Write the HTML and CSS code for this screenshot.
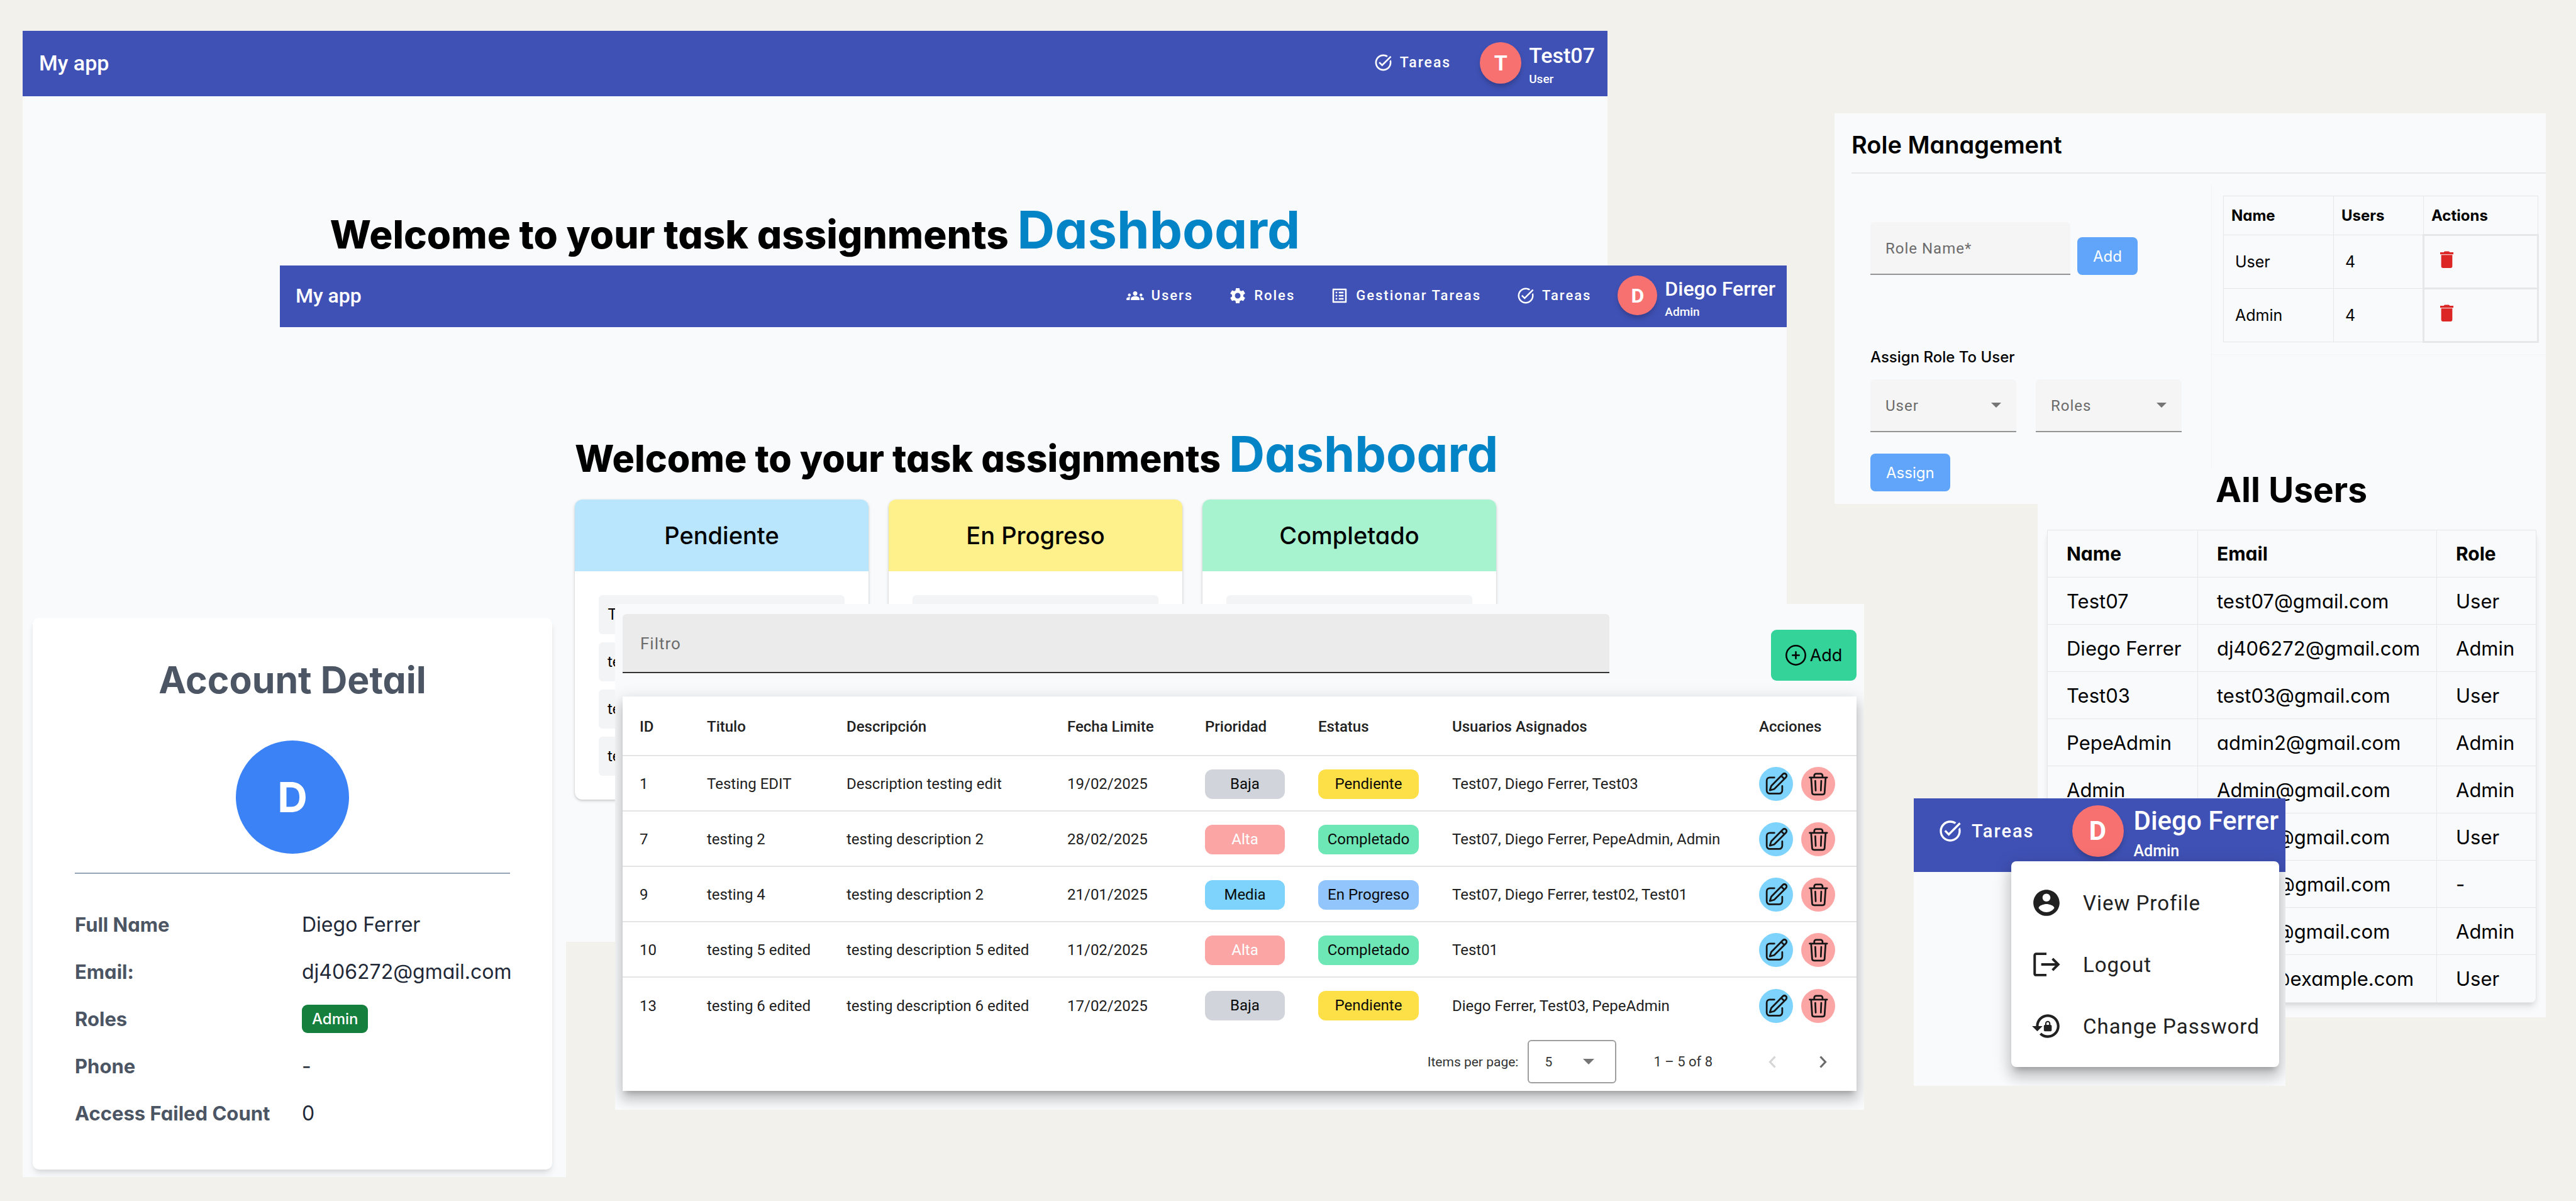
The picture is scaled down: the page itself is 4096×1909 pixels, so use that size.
FILE: index.html
```html
<!DOCTYPE html>
<html lang="es">
<head>
<meta charset="utf-8">
<meta name="viewport" content="width=device-width, initial-scale=1">
<title>My app</title>
<link rel="stylesheet" href="styles.css">
</head>
<body>
<svg class="sprite" aria-hidden="true">
  <symbol id="i-groups" viewBox="-1 -1 26 26"><path d="M12 12.75c1.63 0 3.07.39 4.24.9 1.08.48 1.76 1.56 1.76 2.73V18H6v-1.61c0-1.18.68-2.26 1.76-2.73 1.17-.52 2.61-.91 4.24-.91zM4 13c1.1 0 2-.9 2-2s-.9-2-2-2-2 .9-2 2 .9 2 2 2zm1.13 1.1c-.37-.06-.74-.1-1.13-.1-.99 0-1.93.21-2.78.58C.48 14.9 0 15.62 0 16.43V18h4.5v-1.61c0-.83.23-1.61.63-2.29zM20 13c1.1 0 2-.9 2-2s-.9-2-2-2-2 .9-2 2 .9 2 2 2zm4 3.43c0-.81-.48-1.53-1.22-1.85-.85-.37-1.79-.58-2.78-.58-.39 0-.76.04-1.13.1.4.68.63 1.46.63 2.29V18H24v-1.57zM12 6c1.66 0 3 1.34 3 3s-1.34 3-3 3-3-1.34-3-3 1.34-3 3-3z"/></symbol>
  <symbol id="i-settings" viewBox="0 0 24 24"><path d="M19.14 12.94c.04-.3.06-.61.06-.94 0-.32-.02-.64-.07-.94l2.03-1.58c.18-.14.23-.41.12-.61l-1.92-3.32c-.12-.22-.37-.29-.59-.22l-2.39.96c-.5-.38-1.03-.7-1.62-.94l-.36-2.54c-.04-.24-.24-.41-.48-.41h-3.84c-.24 0-.43.17-.47.41l-.36 2.54c-.59.24-1.13.57-1.62.94l-2.39-.96c-.22-.08-.47 0-.59.22L2.74 8.87c-.12.21-.08.47.12.61l2.03 1.58c-.05.3-.09.63-.09.94s.02.64.07.94l-2.03 1.58c-.18.14-.23.41-.12.61l1.92 3.32c.12.22.37.29.59.22l2.39-.96c.5.38 1.03.7 1.62.94l.36 2.54c.05.24.24.41.48.41h3.84c.24 0 .44-.17.47-.41l.36-2.54c.59-.24 1.13-.56 1.62-.94l2.39.96c.22.08.47 0 .59-.22l1.92-3.32c.12-.22.07-.47-.12-.61l-2.01-1.58zM12 15.6c-1.98 0-3.6-1.62-3.6-3.6s1.62-3.6 3.6-3.6 3.6 1.62 3.6 3.6-1.62 3.6-3.6 3.6z"/></symbol>
  <symbol id="i-list" viewBox="0 0 24 24"><path d="M19 5v14H5V5h14m1.1-2H3.9c-.5 0-.9.4-.9.9v16.2c0 .4.4.9.9.9h16.2c.4 0 .9-.5.9-.9V3.9c0-.5-.5-.9-.9-.9zM11 7h6v2h-6V7zm0 4h6v2h-6v-2zm0 4h6v2h-6zM7 7h2v2H7zm0 4h2v2H7zm0 4h2v2H7z"/></symbol>
  <symbol id="i-task" viewBox="0 0 24 24"><path d="M22 5.18L10.59 16.6l-4.24-4.24 1.41-1.41 2.83 2.83 10-10L22 5.18zm-2.21 5.04c.13.57.21 1.17.21 1.78 0 4.42-3.58 8-8 8s-8-3.58-8-8 3.58-8 8-8c1.58 0 3.04.46 4.28 1.25l1.44-1.44C16.1 2.67 14.13 2 12 2 6.48 2 2 6.48 2 12s4.48 10 10 10 10-4.48 10-10c0-1.19-.22-2.33-.6-3.39l-1.61 1.61z"/></symbol>
  <symbol id="i-account" viewBox="0 0 24 24"><path d="M12 2C6.48 2 2 6.48 2 12s4.48 10 10 10 10-4.48 10-10S17.52 2 12 2zm0 3c1.66 0 3 1.34 3 3s-1.34 3-3 3-3-1.34-3-3 1.34-3 3-3zm0 14.2c-2.5 0-4.71-1.28-6-3.22.03-1.99 4-3.08 6-3.08 1.99 0 5.97 1.09 6 3.08-1.29 1.94-3.5 3.22-6 3.22z"/></symbol>
  <symbol id="i-logout" viewBox="0 0 24 24"><path fill="none" stroke="currentColor" stroke-width="1.9" d="M12 3.9H4.2c-.7 0-1.2.5-1.2 1.200v13.800c0 .7.5 1.200 1.200 1.200H12M8 12h12.600M16.600 7.600 21 12l-4.400 4.400"/></symbol>
  <symbol id="i-reset" viewBox="0 0 24 24"><path d="M13 3c-4.970 0-9 4.030-9 9H1l4 4 4-4H6c0-3.860 3.140-7 7-7s7 3.140 7 7-3.140 7-7 7c-1.900 0-3.620-.76-4.880-1.990L6.700 18.420C8.320 20.010 10.550 21 13 21c4.970 0 9-4.030 9-9s-4.030-9-9-9zm2 8v-1c0-1.100-.9-2-2-2s-2 .9-2 2v1c-.55 0-1 .45-1 1v3c0 .55.45 1 1 1h4c.55 0 1-.45 1-1v-3c0-.55-.45-1-1-1zm-1 0h-2v-1c0-.55.45-1 1-1s1 .45 1 1v1z"/></symbol>
  <symbol id="i-edit" viewBox="0 0 82 82"><path fill="none" stroke="currentColor" stroke-width="4.200" stroke-linecap="round" stroke-linejoin="round" d="M37 25.500H26a7.500 7.500 0 0 0-7.500 7.500v24a7.500 7.500 0 0 0 7.500 7.500h22.500a7.500 7.500 0 0 0 7.500-7.500V46M26 56.500l3.500-10.500L57.500 17.500a5 5 0 0 1 7.500 7.500L36.500 53.500zM53.500 21.500l7.500 7.500"/></symbol>
  <symbol id="i-bin" viewBox="0 0 82 82"><path fill="none" stroke="currentColor" stroke-width="4.200" stroke-linecap="round" stroke-linejoin="round" d="M20.500 25.500h42M31.500 25v-4a4.500 4.500 0 0 1 4.500-4.500h11a4.500 4.500 0 0 1 4.500 4.500v4M24 26l2.500 36.500a4.500 4.500 0 0 0 4.500 4h21a4.500 4.500 0 0 0 4.500-4L59 26M34 33.500l1 23.500M48.500 33.500l-1 23.500"/></symbol>
  <symbol id="i-plus" viewBox="0 0 50 50"><g fill="none" stroke="currentColor" stroke-width="3.800" stroke-linecap="round"><circle cx="25" cy="25" r="23"/><path d="M25 17v16M17 25h16"/></g></symbol>
  <symbol id="i-trash" viewBox="0 0 32 41"><path d="M9 3a2.500 2.500 0 0 1 2.500-2.500h9A2.500 2.500 0 0 1 23 3h9v4.800H0V3zM2.500 9.500h27v27a4.500 4.500 0 0 1-4.500 4.500H7a4.500 4.500 0 0 1-4.500-4.500z"/></symbol>
  <symbol id="i-prev" viewBox="0 0 12 20"><path fill="none" stroke="currentColor" stroke-width="3.200" d="M10.500 1.500 2.500 10l8 8.500"/></symbol>
  <symbol id="i-next" viewBox="0 0 12 20"><path fill="none" stroke="currentColor" stroke-width="3.200" d="m1.500 1.500 8 8.500-8 8.500"/></symbol>
</svg>

<div class="desk">

  <section class="window user-home">
    <header class="bar bar-large">
      <a class="brand" href="#">My app</a>
      <nav class="bar-nav">
        <a href="#"><svg class="icon"><use href="#i-task"/></svg>Tareas</a>
      </nav>
      <button type="button" class="profile"><span class="avatar">T</span><span class="who"><span class="who-name">Test07</span><span class="who-role">User</span></span></button>
    </header>
    <h1 class="welcome welcome-large">Welcome to your task assignments <span>Dashboard</span></h1>
  </section>

  <section class="window admin-home">
    <header class="bar bar-medium">
      <a class="brand" href="#">My app</a>
      <nav class="bar-nav">
        <a href="#"><svg class="icon"><use href="#i-groups"/></svg>Users</a>
        <a href="#"><svg class="icon"><use href="#i-settings"/></svg>Roles</a>
        <a href="#"><svg class="icon"><use href="#i-list"/></svg>Gestionar Tareas</a>
        <a href="#"><svg class="icon"><use href="#i-task"/></svg>Tareas</a>
      </nav>
      <button type="button" class="profile"><span class="avatar">D</span><span class="who"><span class="who-name">Diego Ferrer</span><span class="who-role">Admin</span></span></button>
    </header>
    <main class="board-page">
      <h1 class="welcome">Welcome to your task assignments <span>Dashboard</span></h1>
      <div class="board">
        <section class="lane"><h2 class="lane-title lane-pending">Pendiente</h2>
          <ul class="lane-list"><li>Te</li><li>te</li><li>te</li><li>te</li></ul></section>
        <section class="lane"><h2 class="lane-title lane-progress">En Progreso</h2>
          <ul class="lane-list"><li></li></ul></section>
        <section class="lane"><h2 class="lane-title lane-done">Completado</h2>
          <ul class="lane-list"><li></li></ul></section>
      </div>
    </main>
  </section>

  <section class="window account">
    <div class="account-card">
      <h2 class="account-title">Account Detail</h2>
      <div class="account-avatar">D</div>
      <dl class="account-list">
        <dt>Full Name</dt><dd>Diego Ferrer</dd>
        <dt>Email:</dt><dd>dj406272@gmail.com</dd>
        <dt>Roles</dt><dd><span class="role-badge">Admin</span></dd>
        <dt>Phone</dt><dd>-</dd>
        <dt>Access Failed Count</dt><dd>0</dd>
      </dl>
    </div>
  </section>

  <section class="window tasks">
    <div class="tasks-head">
      <div class="field field-filter"><label for="filter">Filtro</label><input id="filter" type="text"></div>
      <button type="button" class="add-task"><svg class="icon"><use href="#i-plus"/></svg>Add</button>
    </div>
    <div class="sheet">
      <table class="task-table">
        <colgroup><col class="c-id"><col class="c-title"><col class="c-desc"><col class="c-date"><col class="c-prio"><col class="c-status"><col class="c-users"><col class="c-act"></colgroup>
        <thead><tr><th>ID</th><th>Titulo</th><th>Descripción</th><th>Fecha Limite</th><th>Prioridad</th><th>Estatus</th><th>Usuarios Asignados</th><th>Acciones</th></tr></thead>
        <tbody>
          <tr><td>1</td><td>Testing EDIT</td><td>Description testing edit</td><td>19/02/2025</td><td><span class="chip chip-low">Baja</span></td><td><span class="chip chip-pending">Pendiente</span></td><td>Test07, Diego Ferrer, Test03</td><td><div class="acts"><button type="button" class="act act-edit" aria-label="Edit"><svg class="icon"><use href="#i-edit"/></svg></button><button type="button" class="act act-bin" aria-label="Delete"><svg class="icon"><use href="#i-bin"/></svg></button></div></td></tr>
          <tr><td>7</td><td>testing 2</td><td>testing description 2</td><td>28/02/2025</td><td><span class="chip chip-high">Alta</span></td><td><span class="chip chip-done">Completado</span></td><td>Test07, Diego Ferrer, PepeAdmin, Admin</td><td><div class="acts"><button type="button" class="act act-edit" aria-label="Edit"><svg class="icon"><use href="#i-edit"/></svg></button><button type="button" class="act act-bin" aria-label="Delete"><svg class="icon"><use href="#i-bin"/></svg></button></div></td></tr>
          <tr><td>9</td><td>testing 4</td><td>testing description 2</td><td>21/01/2025</td><td><span class="chip chip-mid">Media</span></td><td><span class="chip chip-progress">En Progreso</span></td><td>Test07, Diego Ferrer, test02, Test01</td><td><div class="acts"><button type="button" class="act act-edit" aria-label="Edit"><svg class="icon"><use href="#i-edit"/></svg></button><button type="button" class="act act-bin" aria-label="Delete"><svg class="icon"><use href="#i-bin"/></svg></button></div></td></tr>
          <tr><td>10</td><td>testing 5 edited</td><td>testing description 5 edited</td><td>11/02/2025</td><td><span class="chip chip-high">Alta</span></td><td><span class="chip chip-done">Completado</span></td><td>Test01</td><td><div class="acts"><button type="button" class="act act-edit" aria-label="Edit"><svg class="icon"><use href="#i-edit"/></svg></button><button type="button" class="act act-bin" aria-label="Delete"><svg class="icon"><use href="#i-bin"/></svg></button></div></td></tr>
          <tr><td>13</td><td>testing 6 edited</td><td>testing description 6 edited</td><td>17/02/2025</td><td><span class="chip chip-low">Baja</span></td><td><span class="chip chip-pending">Pendiente</span></td><td>Diego Ferrer, Test03, PepeAdmin</td><td><div class="acts"><button type="button" class="act act-edit" aria-label="Edit"><svg class="icon"><use href="#i-edit"/></svg></button><button type="button" class="act act-bin" aria-label="Delete"><svg class="icon"><use href="#i-bin"/></svg></button></div></td></tr>
        </tbody>
      </table>
      <div class="pager">
        <label for="page-size">Items per page:</label>
        <div class="pager-size"><select id="page-size"><option>5</option></select></div>
        <span class="pager-range">1 – 5 of 8</span>
        <button type="button" class="pager-prev" aria-label="Previous page" disabled><svg class="icon"><use href="#i-prev"/></svg></button>
        <button type="button" class="pager-next" aria-label="Next page"><svg class="icon"><use href="#i-next"/></svg></button>
      </div>
    </div>
  </section>

  <section class="window roles">
    <h2 class="roles-title">Role Management</h2>
    <div class="roles-body">
      <div class="roles-forms">
        <form class="add-role">
          <div class="field field-role"><label for="role-name">Role Name*</label><input id="role-name" type="text"></div>
          <button type="button" class="blue">Add</button>
        </form>
        <form class="assign">
          <h3 class="assign-title">Assign Role To User</h3>
          <div class="assign-row">
            <div class="field field-select"><label for="pick-user">User</label><select id="pick-user"><option></option></select></div>
            <div class="field field-select"><label for="pick-role">Roles</label><select id="pick-role"><option></option></select></div>
          </div>
          <button type="button" class="blue">Assign</button>
        </form>
      </div>
      <aside class="roles-side">
        <div class="roles-box">
          <table class="role-table">
            <thead><tr><th>Name</th><th>Users</th><th>Actions</th></tr></thead>
            <tbody>
              <tr><td>User</td><td>4</td><td class="cell-act"><button type="button" class="trash" aria-label="Delete"><svg class="icon"><use href="#i-trash"/></svg></button></td></tr>
              <tr><td>Admin</td><td>4</td><td class="cell-act"><button type="button" class="trash" aria-label="Delete"><svg class="icon"><use href="#i-trash"/></svg></button></td></tr>
            </tbody>
          </table>
        </div>
      </aside>
    </div>
  </section>

  <section class="window users">
    <h2 class="users-title">All Users</h2>
    <table class="user-table">
      <colgroup><col class="u-name"><col class="u-mail"><col class="u-role"></colgroup>
      <thead><tr><th>Name</th><th>Email</th><th>Role</th></tr></thead>
      <tbody>
        <tr><td>Test07</td><td>test07@gmail.com</td><td>User</td></tr>
        <tr><td>Diego Ferrer</td><td>dj406272@gmail.com</td><td>Admin</td></tr>
        <tr><td>Test03</td><td>test03@gmail.com</td><td>User</td></tr>
        <tr><td>PepeAdmin</td><td>admin2@gmail.com</td><td>Admin</td></tr>
        <tr><td>Admin</td><td>Admin@gmail.com</td><td>Admin</td></tr>
        <tr><td></td><td>test02@gmail.com</td><td>User</td></tr>
        <tr><td></td><td>test04@gmail.com</td><td>-</td></tr>
        <tr><td></td><td>test05@gmail.com</td><td>Admin</td></tr>
        <tr><td></td><td>test01@example.com</td><td>User</td></tr>
      </tbody>
    </table>
  </section>

  <section class="window profile-menu">
    <header class="bar bar-huge">
      <nav class="bar-nav">
        <a href="#"><svg class="icon"><use href="#i-task"/></svg>Tareas</a>
      </nav>
      <button type="button" class="profile"><span class="avatar">D</span><span class="who"><span class="who-name">Diego Ferrer</span><span class="who-role">Admin</span></span></button>
    </header>
    <div class="menu" role="menu">
      <button type="button" role="menuitem"><svg class="icon"><use href="#i-account"/></svg>View Profile</button>
      <button type="button" role="menuitem"><svg class="icon"><use href="#i-logout"/></svg>Logout</button>
      <button type="button" role="menuitem"><svg class="icon"><use href="#i-reset"/></svg>Change Password</button>
    </div>
  </section>

</div>
</body>
</html>
```

FILE: styles.css
```css
* { box-sizing: border-box; }

:root {
  --display: Inter, "Open Sans", sans-serif;
  --material: Roboto, "Liberation Sans", sans-serif;
  --indigo: #3f51b5;
  --page: #f8fafc;
  --line: #e5e7eb;
}

body {
  margin: 0;
  background: #f2f1eb;
  color: #000;
  font-family: var(--display);
  font-feature-settings: "cv11";
}

h1, h2, h3, ul, dl, dd { margin: 0; padding: 0; }
button, input, select { font: inherit; color: inherit; font-feature-settings: inherit; border: 0; margin: 0; padding: 0; background: none; border-radius: 0; }
button { cursor: pointer; }
a { color: inherit; text-decoration: none; }
table { border-collapse: collapse; width: 100%; }
th { text-align: left; }
.icon { display: block; flex: none; fill: currentColor; }
.sprite { display: none; }

/* Free canvas with overlapping windows */
.desk { position: relative; min-height: 100vh; overflow: hidden; }
.window { position: absolute; background: var(--page); overflow: hidden; }
.user-home { top: 49px; left: 36px; right: 1540px; min-height: 70vh; }
.admin-home { top: 422px; left: 445px; right: 1255px; }
.account { top: 965px; left: 36px; right: 3196px; padding: 17px 22px 12px 16px; }
.tasks { top: 960px; left: 978px; right: 1132px; padding: 16px 12px 30px; }
.roles { top: 180px; left: 2917px; right: 48px; padding-bottom: 20px; }
.users { top: 744px; left: 3240px; right: 48px; padding: 0 16px 23px 15px; }
.profile-menu { top: 1269px; left: 3043px; right: 462px; padding-bottom: 30px; }

/* Top bars */
.bar { display: flex; align-items: center; background: var(--indigo); color: #fff; font-family: var(--material); font-weight: 500; }
.brand { margin-right: auto; }
.bar-nav { display: flex; letter-spacing: 2px; }
.bar-nav a { display: flex; align-items: center; }
.profile { display: flex; align-items: center; text-align: left; font-weight: 500; }
.avatar { display: grid; place-items: center; flex: none; border-radius: 50%; background: #f87171; font-weight: 700; box-shadow: 0 6px 10px -2px rgba(0, 0, 0, .25); }
.who { display: flex; flex-direction: column; padding-top: 15px; white-space: nowrap; }

.bar-large { height: 104px; padding: 0 20px 3px 26px; font-size: 23px; }
.bar-large .brand, .bar-large .who-name { font-size: 34px; }
.bar-large .bar-nav a { gap: 11px; }
.bar-large .icon { width: 31px; height: 31px; }
.bar-large .profile { margin-left: 46px; gap: 12px; }
.bar-large .avatar { width: 66px; height: 66px; font-size: 34px; }
.bar-large .who-name { line-height: 38px; }
.bar-large .who-role { font-size: 19px; line-height: 38px; }

.bar-medium { height: 98px; padding: 0 18px 3px 25px; font-size: 22px; }
.bar-medium .brand, .bar-medium .who-name { font-size: 32px; }
.bar-medium .bar-nav { gap: 56px; }
.bar-medium .bar-nav a { gap: 11px; }
.bar-medium .icon { width: 30px; height: 30px; }
.bar-medium .profile { margin-left: 42px; gap: 12px; }
.bar-medium .avatar { width: 63px; height: 63px; font-size: 32px; }
.bar-medium .who-name { line-height: 36px; }
.bar-medium .who-role { font-size: 19px; line-height: 37px; }

.bar-huge { height: 117px; padding: 0 11px 14px 38px; font-size: 29px; }
.bar-huge .bar-nav a { gap: 14px; }
.bar-huge .icon { width: 40px; height: 40px; }
.bar-huge .profile { margin-left: 60px; gap: 16px; }
.bar-huge .avatar { width: 82px; height: 82px; font-size: 42px; }
.bar-huge .who-name { font-size: 42px; line-height: 48px; }
.bar-huge .who-role { font-size: 25px; line-height: 47px; }

/* Dashboards */
.welcome { font-size: 59px; font-weight: 800; line-height: 100px; text-align: center; white-space: nowrap; }
.welcome span { font-size: 79px; font-weight: 700; line-height: 1; color: #0284c7; }
.welcome-large { margin-top: 170px; font-size: 62px; }
.welcome-large span { font-size: 83px; }

.board-page { padding: 159px 462px 226px 469px; }
.board { display: grid; grid-template-columns: repeat(3, 1fr); gap: 32px; margin-top: 15px; }
.lane { background: #fff; border-radius: 12px; overflow: hidden; box-shadow: 0 2px 5px rgba(0, 0, 0, .15), 0 1px 3px rgba(0, 0, 0, .1); }
.lane-title { height: 114px; font-size: 38px; font-weight: 500; line-height: 114px; text-align: center; }
.lane-pending { background: #bae6fd; }
.lane-progress { background: #fef08a; }
.lane-done { background: #a7f3d0; }
.lane-list { display: grid; gap: 13px; padding: 38px; list-style: none; }
.lane-list li { height: 62px; padding: 0 14px; border-radius: 6px; background: #f3f4f6; font-size: 24px; line-height: 62px; }

/* Account card */
.account-card { background: #fff; border-radius: 10px; padding: 62px 67px 52px; box-shadow: 0 8px 12px -2px rgba(0, 0, 0, .1), 0 4px 8px -4px rgba(0, 0, 0, .1); }
.account-title { font-size: 59px; font-weight: 700; line-height: 74px; text-align: center; color: #4b5563; }
.account-avatar { display: grid; place-items: center; width: 180px; height: 180px; margin: 59px auto 30px; border-radius: 50%; background: #3b82f6; color: #fff; font-size: 66px; font-weight: 700; }
.account-list { display: grid; grid-template-columns: 361px 1fr; grid-auto-rows: 75px; align-items: center; border-top: 2px solid #94a3b8; padding-top: 43px; font-size: 32px; color: #1f2937; }
.account-list dt { font-size: 31px; font-weight: 700; color: #4b5563; }
.role-badge { display: inline-block; padding: 0 16px; border-radius: 9px; background: #15803d; color: #fff; font-size: 24px; font-weight: 500; line-height: 45px; }

/* Fields */
.field { display: grid; align-items: center; background: #f5f5f5; border-bottom: 2px solid #949494; border-radius: 6px 6px 0 0; font-family: var(--material); color: #6b6b6b; letter-spacing: 1px; }
.field > * { grid-area: 1 / 1; }
.field label { padding: 2px 0 0 24px; pointer-events: none; }
.field input, .field select { width: 100%; height: 100%; outline: 0; appearance: none; }

/* Task table */
.tasks-head { display: flex; justify-content: space-between; margin-bottom: 25px; }
.field-filter { flex: 0 1 1569px; height: 94px; margin-bottom: 12px; background: #ebebeb; border-color: #333; font-size: 26px; }
.field-filter label { padding-left: 28px; }
.add-task { display: flex; align-items: center; justify-content: center; gap: 6px; align-self: flex-end; width: 136px; height: 81px; border-radius: 9px; background: #34d399; color: #000; font-size: 27px; }
.add-task .icon { width: 33px; height: 33px; }
.sheet { background: #fff; font-family: var(--material); color: #212121; box-shadow: 0 8px 8px -5px rgba(0, 0, 0, .2), 0 14px 17px 2px rgba(0, 0, 0, .14), 0 5px 24px 3px rgba(0, 0, 0, .12); }
.task-table { table-layout: fixed; font-size: 24px; }
.c-id { width: 107px; } .c-title { width: 222px; } .c-desc { width: 351px; } .c-date { width: 219px; }
.c-prio { width: 180px; } .c-status { width: 213px; } .c-users { width: 488px; } .c-act { width: 182px; }
.task-table th { height: 94px; padding: 2px 0 0 27px; font-weight: 500; border-bottom: 2px solid #e4e4e4; }
.task-table td { height: 88px; padding: 2px 0 0 27px; white-space: nowrap; border-bottom: 2px solid #e4e4e4; }
.task-table tbody tr:last-child td { border-bottom: 0; }
.chip { display: block; border-radius: 12px; text-align: center; line-height: 47px; color: #0a0a0a; margin-right: 26px; }
.chip-low { background: #d1d5db; }
.chip-high { background: #fca5a5; color: #fff; }
.chip-mid { background: #7dd3fc; }
.chip-pending { background: #fde047; }
.chip-done { background: #6ee7b7; }
.chip-progress { background: #93c5fd; }
.acts { display: flex; gap: 13px; }
.act { width: 54px; height: 54px; border-radius: 50%; color: #161616; }
.act .icon { width: 54px; height: 54px; }
.act-edit { background: #7dd3fc; }
.act-bin { background: #fca5a5; }

.pager { display: flex; align-items: center; justify-content: flex-end; height: 93px; padding-right: 47px; font-size: 21px; color: #333; }
.pager-size { display: grid; align-items: center; width: 141px; height: 69px; margin: 0 59px 0 15px; border: 2px solid #9e9e9e; border-radius: 6px; }
.pager-size > *, .pager-size::after { grid-area: 1 / 1; }
.pager-size select { width: 100%; height: 100%; padding-left: 25px; appearance: none; }
.pager-size::after, .field-select::after { content: ""; justify-self: end; border: solid transparent; border-top-color: #757575; pointer-events: none; }
.pager-size::after { margin-right: 33px; border-width: 9px 9px 0; }
.pager-range { font-size: 22px; }
.pager .icon { width: 12px; height: 20px; }
.pager-prev { margin-left: 89px; color: #d5d5d5; }
.pager-next { margin-left: 69px; color: #6b6b6b; }

/* Role management */
.roles-title { margin-left: 27px; padding: 30px 0 24px; border-bottom: 2px solid var(--line); font-size: 38px; font-weight: 600; line-height: 40px; }
.roles-body { display: flex; }
.roles-forms { flex: 0 0 599px; padding: 77px 0 0 57px; font-size: 24px; }
.add-role { display: flex; align-items: flex-end; gap: 11px; }
.field-role { width: 318px; height: 84px; }
.blue { height: 60px; padding: 0 25px; border-radius: 8px; background: #60a5fa; color: #fff; }
.assign-title { margin-top: 113px; font-size: 24px; font-weight: 500; line-height: 36px; }
.assign-row { display: flex; gap: 31px; margin: 17px 0 34px; }
.field-select { width: 232px; height: 84px; }
.field-select::after { grid-area: 1 / 1; margin-right: 24px; border-width: 8px 8px 0; }
.roles-side { flex: 1; margin-top: 17px; border-left: 1px solid #f1f3f5; }
.roles-box { padding: 18px 13px 18px 18px; border-bottom: 1px solid #f1f3f5; }
.role-table { border: 1px solid var(--line); font-size: 25px; table-layout: fixed; }
.role-table th, .role-table td { border: 1px solid var(--line); }
.role-table th { height: 62px; padding: 0 12px; font-size: 24px; font-weight: 700; width: 175px; }
.role-table th:nth-child(2) { width: 143px; }
.role-table th:nth-child(3) { width: 182px; }
.role-table td { height: 85px; padding: 0 18px; }
.role-table .cell-act { border-width: 3px; padding: 0 25px 8px; }
.trash { display: block; color: #dc2626; }
.trash .icon { width: 21px; height: 27px; }

/* All users */
.users-title { padding-bottom: 30px; font-size: 55px; font-weight: 700; line-height: 68px; text-align: center; }
.user-table { table-layout: fixed; border-collapse: separate; border-spacing: 0; border: 1px solid var(--line); border-radius: 0 0 8px 8px; font-size: 31px; box-shadow: 0 8px 12px -2px rgba(0, 0, 0, .1), 0 4px 8px -4px rgba(0, 0, 0, .1); }
.u-name { width: 239px; } .u-mail { width: 380px; } .u-role { width: 157px; }
.user-table th, .user-table td { height: 75px; padding: 0 0 0 30px; border-bottom: 1px solid var(--line); border-right: 1px solid var(--line); white-space: nowrap; }
.user-table th { font-size: 30px; font-weight: 700; }
.user-table tr > :last-child { border-right: 0; }
.user-table tbody tr:last-child td { border-bottom: 0; }

/* Profile menu */
.menu { position: relative; margin: -17px 10px 0 155px; padding: 17px 0 16px; border-radius: 8px; background: #fff; font-family: var(--material); font-size: 33px; color: #212121; box-shadow: 0 10px 10px -6px rgba(0, 0, 0, .2), 0 16px 20px 2px rgba(0, 0, 0, .14), 0 6px 28px 4px rgba(0, 0, 0, .12); }
.menu button { display: flex; align-items: center; gap: 33px; width: 100%; height: 98px; padding: 0 31px; letter-spacing: 1px; white-space: nowrap; }
.menu .icon { width: 50px; height: 50px; }
```
